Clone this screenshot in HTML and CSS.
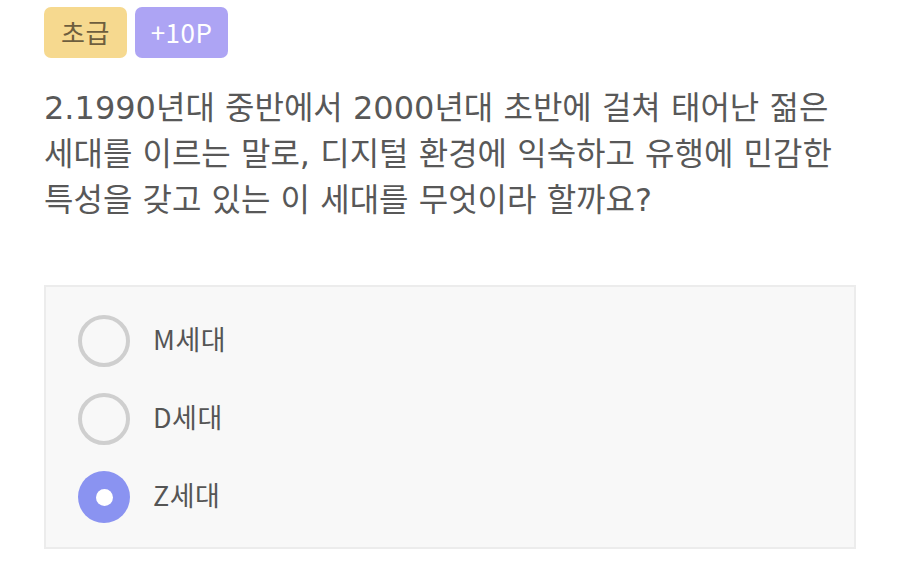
FILE: index.html
```html
<!DOCTYPE html>
<html lang="ko">
<head>
    <meta charset="UTF-8">
    <meta name="viewport" content="width=device-width, initial-scale=1.0">
    <title>퀴즈</title>
    <link rel="stylesheet" href="styles.css">
</head>
<body>

    <!-- 문제 카드 -->
    <div class="quiz">
        <div class="badges">
            <span class="badge level">초급</span>
            <span class="badge point">+10P</span>
        </div>

        <p class="question">2.1990년대 중반에서 2000년대 초반에 걸쳐 태어난 젊은 세대를 이르는 말로, 디지털 환경에 익숙하고 유행에 민감한 특성을 갖고 있는 이 세대를 무엇이라 할까요?</p>

        <div class="choices">
            <label class="choice">
                <span class="radio"></span>
                <span class="choice-text">M세대</span>
            </label>
            <label class="choice">
                <span class="radio"></span>
                <span class="choice-text">D세대</span>
            </label>
            <label class="choice selected">
                <span class="radio"></span>
                <span class="choice-text">Z세대</span>
            </label>
        </div>
    </div>

</body>
</html>
```

FILE: styles.css
```css
* {
    margin: 0;
    padding: 0;
    box-sizing: border-box;
}

body {
    background: #fff;
    font-family: "Noto Sans CJK KR", "Noto Sans", sans-serif;
    color: #555;
}

/* 문제 영역 */
.quiz {
    padding: 7px 44px 0 44px;
    width: 900px;
}

/* 배지 */
.badges {
    display: flex;
    gap: 8px;
}

.badge {
    display: flex;
    align-items: center;
    justify-content: center;
    height: 51px;
    border-radius: 7px;
    font-size: 26px;
    letter-spacing: 0.5px;
    padding-bottom: 3px;
}

.badge.level {
    width: 83px;
    background-color: #f6d98f;
    color: #6e5e3e;
}

.badge.point {
    width: 93px;
    background-color: #ada4f4;
    color: #fff;
}

/* 문제 */
.question {
    margin-top: 27px;
    font-family: "DejaVu Sans", "Noto Sans CJK KR", sans-serif;
    font-size: 32px;
    line-height: 46px;
    letter-spacing: 0;
    word-break: keep-all;
    width: 812px;
    color: #585858;
}

/* 보기 */
.choices {
    margin-top: 62px;
    width: 812px;
    height: 264px;
    background-color: #f8f8f8;
    border: 2px solid #ececec;
    padding: 15px 32px 0 32px;
}

.choice {
    display: flex;
    align-items: center;
    gap: 23px;
    height: 78px;
    cursor: pointer;
}

.radio {
    width: 52px;
    height: 52px;
    border-radius: 50%;
    border: 4px solid #cfcfcf;
    display: flex;
    align-items: center;
    justify-content: center;
}

.choice.selected .radio {
    border: none;
    background-color: #8a93f1;
}

.choice.selected .radio::after {
    content: "";
    width: 17px;
    height: 17px;
    border-radius: 50%;
    background-color: #fff;
}

.choice-text {
    font-size: 27px;
    letter-spacing: 0.5px;
    color: #555;
    margin-top: -6px;
}
```
